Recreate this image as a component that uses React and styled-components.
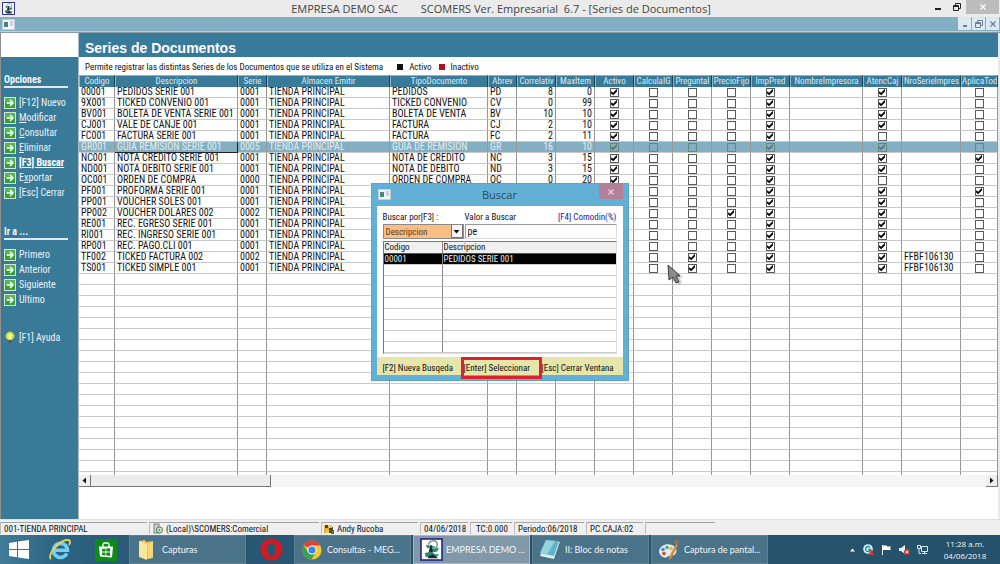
import React from 'react';
import styled, { createGlobalStyle, css } from 'styled-components';

const ui = `'Roboto Condensed', Roboto, 'Liberation Sans', sans-serif`;
const shell = `'Open Sans', 'Noto Sans', sans-serif`;

const Global = createGlobalStyle`
  *, *::before, *::after { box-sizing: border-box; }
  body { margin: 0; background: #fff; font-family: ${ui}; font-size: 9px; line-height: 12px; color: #111; }
  button, input, select { font: inherit; color: inherit; margin: 0; padding: 0; border: 0; background: none; }
  button { cursor: pointer; }
  svg { display: block; flex: none; }
`;

const Screen = styled.div`
  display: flex; flex-direction: column; height: 100vh; overflow: hidden;
`;

/* window chrome */
const TitleBar = styled.header`
  display: grid; grid-template-columns: 96px 1fr 96px; align-items: center;
  height: 17px; padding-left: 2px; background: #ebebeb;
`;
const Title = styled.h1`
  margin: 0; text-align: center; white-space: pre; color: #444;
  font: 400 11px/16px ${shell};
`;
const Controls = styled.div`
  display: flex; justify-content: flex-end; align-items: flex-start; height: 100%; gap: ${p => p.$gap || 0}px; padding-right: 1px;
`;
const WinButton = styled.button`
  display: grid; place-items: center; width: 19px; height: 14px; color: #222;
  ${p => p.$close && css`width: 33px; background: #bcbcbc; color: #fff;`}
`;
const MdiBar = styled.div`
  display: flex; justify-content: space-between; align-items: center;
  height: 16px; padding-left: 2px; background: #84aec2; border-bottom: 1px solid #8b9aa2;
  box-shadow: inset 0 -1px 0 #c3ccd0;
`;
const MdiButton = styled.button`
  display: grid; place-items: center; width: 13px; height: 13px; background: #dce8f2; color: #6d8193;
`;

const Body = styled.div`
  position: relative; display: flex; flex: 1; min-height: 0; border-left: 1px solid #8f8f8f; border-right: 2px solid #e9e9e9;
`;

/* side menu */
const Side = styled.nav`
  flex: none; width: 78px; background: #3a7a99; border-right: 1px solid #a9bcc6; color: #e8f1f5;
`;
const SideLogo = styled.div` height: 24px; background: #fff; `;
const SideHead = styled.h2`
  margin: ${p => p.$top}px 10px 7px 3px; padding-bottom: 1px;
  border-bottom: 2px solid #dfeaf0; font: 700 10px/11px ${ui}; color: #f3f8fa;
`;
const SideList = styled.ul` margin: 0; padding: 0 0 0 3px; list-style: none; `;
const SideButton = styled.button`
  display: flex; align-items: center; gap: 3px; height: 15px; white-space: nowrap;
  font-size: 10px;
  ${p => p.$current && css`font-weight: 700; text-decoration: underline; color: #fff;`}
`;
const HelpArea = styled.div` padding: 23px 0 0 3px; `;

/* document area */
const Main = styled.main` display: flex; flex-direction: column; flex: 1; min-width: 0; `;
const Banner = styled.div`
  flex: none; height: 24px; padding-left: 6px; background: #387a9a; color: #fff;
`;
const BannerTitle = styled.h2` margin: 0; font: 700 14px/30px 'Liberation Sans', sans-serif; height: 24px; `;
const Legend = styled.div` display: flex; align-items: center; flex: none; height: 18px; padding: 2px 6px 0; white-space: nowrap; `;
const LegendKey = styled.span`
  display: inline-flex; align-items: center; gap: 6px; margin-left: ${p => p.$gap}px;
  &::before { content: ''; width: 6px; height: 6px; background: ${p => p.$color}; }
`;
const GridArea = styled.div` flex: 1; min-height: 0; overflow: hidden; `;
const Grid = styled.table`
  width: 100%; table-layout: fixed; border-collapse: separate; border-spacing: 0;
`;
const HeadCell = styled.th`
  height: 12px; padding: 0; overflow: hidden; white-space: nowrap; text-align: center;
  font-weight: 400; line-height: 11px; color: #dcebf2; background: #3a7a99;
  border-right: 1px solid #1d4257; border-left: 1px solid #8fb4c6; border-top: 1px solid #8fb4c6;
`;
const Row = styled.tr`
  ${p => p.$selected && css`background: #84aec1; color: #e0edf3;`}
`;
const Cell = styled.td`
  height: 11px; padding: 0 2px; overflow: hidden; white-space: nowrap; font-size: 10px; line-height: 10px;
  text-align: ${p => p.$align || 'left'};
  border-right: 1px solid #969696; border-bottom: 1px solid #c9c9c9;
  ${p => p.$focus && css`border-right: 1px solid #222; border-bottom: 1px solid #222;`}
`;
const Check = styled.input.attrs({ type: 'checkbox' })`
  appearance: none; display: block; width: 9px; height: 9px; margin: 0 auto;
  border: 1px solid ${p => (p.$dim ? '#5d8f7d' : '#5a5a5a')}; background: ${p => (p.$dim ? 'transparent' : '#fff')};
  &:checked::before {
    content: ''; display: block; width: 7px; height: 7px; background: ${p => (p.$dim ? '#5d7470' : '#000')};
    clip-path: polygon(8% 38%, 38% 60%, 92% 4%, 92% 42%, 38% 96%, 8% 72%);
  }
`;
const ScrollBar = styled.div` display: flex; flex: none; height: 12px; margin-bottom: 32px; background: #f5f5f5; `;
const ScrollButton = styled.button`
  display: grid; place-items: center; width: 12px; height: 12px; background: #efefef;
  border-right: 1px solid #777; border-bottom: 1px solid #777;
`;
const Thumb = styled.div`
  width: 180px; margin-right: auto; background: #ececec;
  border-right: 1px solid #777; border-bottom: 1px solid #777;
`;

/* search dialog */
const Dialog = styled.section`
  position: absolute; top: 150px; left: 50%; width: 258px; margin-left: -129px;
  padding: 0 5px 5px; background: #62b0d6; border: 1px solid #5aa4c9;
`;
const DialogBar = styled.header`
  display: grid; grid-template-columns: 24px 1fr 24px; height: 22px;
`;
const DialogTitle = styled.h2` margin: 0; text-align: center; font: 400 11px/22px ${shell}; color: #2c4a58; `;
const DialogClose = styled.button`
  display: grid; place-items: center; height: 15px; background: #b47f98; color: #e9cfda;
`;
const DialogIconBox = styled.span` display: block; padding: 5px 0 0 1px; `;
const DialogBody = styled.div` padding: 5px 6px 3px; background: #fff; `;
const Fields = styled.div`
  display: grid; grid-template-columns: 81px 1fr; column-gap: 1px; row-gap: 1px; margin-bottom: 2px;
`;
const FieldLabels = styled.div` display: flex; justify-content: space-between; `;
const Label = styled.label` white-space: nowrap; `;
const Hint = styled.span` color: #1c1c9c; white-space: nowrap; `;
const SelectBox = styled.div`
  position: relative; height: 15px; border: 1px solid #8a8a8a; background: #fabd83;
`;
const Select = styled.select` appearance: none; width: 100%; height: 13px; padding-left: 2px; line-height: 12px; color: #5a3a14; `;
const SelectArrow = styled.span`
  position: absolute; top: 0; right: 0; display: grid; place-items: center; width: 12px; height: 13px;
  background: #f4f4f4; border: 1px solid #777; border-width: 0 1px 1px 1px; pointer-events: none;
`;
const TextBox = styled.input` width: 100%; height: 15px; padding: 0 2px; font-size: 10px; border: 1px solid #999; border-right-color: #ddd; border-bottom-color: #ddd; background: #fff; `;
const Results = styled.table`
  width: 100%; table-layout: fixed; border-collapse: separate; border-spacing: 0;
  border: 1px solid #777; border-right-color: #ddd; border-bottom-color: #ddd;
`;
const ResultHead = styled.th`
  height: 12px; padding: 0 1px; text-align: left; font-weight: 400; line-height: 11px; background: #f0f0f0;
  border-right: 1px solid #888; border-bottom: 1px solid #555;
  &:last-child { border-right: 0; }
`;
const ResultCell = styled.td`
  height: 11px; padding: 0 1px; white-space: nowrap; line-height: 10px;
  border-right: 1px solid #888; border-bottom: 1px solid #ccc;
  ${p => p.$active && css`background: #000; color: #eee;`}
  &:last-child { border-right: 0; }
`;
const DialogFooter = styled.footer` display: flex; align-items: flex-start; height: 18px; padding-left: 6px; background: #e6e6ab; `;
const FooterButton = styled.button`
  flex: none; height: 22px; white-space: nowrap; text-align: left;
  width: ${p => p.$w}px;
  ${p => p.$marked && css`border: 3px solid #e0212b;`}
`;
const Pointer = styled.svg` position: absolute; left: 666px; top: 231px; `;

/* status line */
const Status = styled.footer`
  display: flex; flex: none; gap: 2px; height: 16px; padding: 2px 0 1px; background: #efefef; border-top: 1px solid #e0e0e0;
`;
const Panel = styled.div`
  display: flex; align-items: center; gap: 3px; width: ${p => p.$w}px; padding-left: ${p => p.$pad || 3}px; white-space: nowrap;
  border-top: 1px solid #a5a5a5; border-left: 1px solid #bdbdbd;
`;

/* task bar */
const TaskBar = styled.div`
  display: flex; flex: none; align-items: stretch; height: 29px; color: #f2f6f8;
  font: 400 9px/12px Lato, ${shell};
  background: linear-gradient(90deg, #3f7d9b 0, #2b6280 60px, #2a5a77 130px, #28536d 400px, #24516b 100%);
`;
const Launcher = styled.button`
  display: grid; place-items: center; width: ${p => p.$w}px;
`;
const Task = styled.button`
  display: flex; align-items: center; gap: 3px; width: 117px; margin-right: 2px; padding-left: 5px; overflow: hidden; white-space: nowrap;
  background: ${p => (p.$active ? '#8098a8' : '#4a7289')}; border: 1px solid ${p => (p.$active ? '#a9bac5' : '#5d8297')};
`;
const TaskIcon = styled.span` display: grid; place-items: center; width: 24px; flex: none; `;
const Tray = styled.div` display: flex; align-items: center; gap: 7px; margin-left: auto; padding-right: 12px; `;
const Clock = styled.time` display: block; width: 46px; text-align: center; white-space: nowrap; margin-left: 7px; font: 400 8px/12px ${shell}; `;

const AppIcon = ({ size = 13 }) => (
  <svg width={size} height={size} viewBox="0 0 24 24">
    <rect x="1" y="1" width="22" height="22" fill="#fff" stroke="#2b2f8a" strokeWidth="1.800" />
    <path d="M9 7c0-5 9-6 9 0 0 2-1 3-2 4" fill="none" stroke="#777" strokeWidth="1.300" />
    <path d="M11 7l4 2-1 5-4 4-3 2 2-5 1-4z" fill="#222" />
    <path d="M6 7l5 1-1 3-3-1zM13 12l7-2-2 4-5 1zM5 16l6-2 5 3 4 0-3 3-6-1-5 1z" fill="#2a8c78" />
    <path d="M9 19l4-2 6 4H8z" fill="#222" /><path d="M12 9l3-1 1 3-3 1z" fill="#56ad9c" />
  </svg>
);
const FormIcon = () => (
  <svg width="13" height="11" viewBox="0 0 13 11">
    <rect x="0.5" y="0.5" width="12" height="10" fill="#f1f3f4" stroke="#c3cdd2" />
    <rect x="2" y="3" width="4" height="5" fill="#49857c" /><rect x="8" y="2" width="3" height="5" fill="#c9d2d8" />
  </svg>
);
const GoIcon = () => (
  <svg width="12" height="12" viewBox="0 0 12 12">
    <rect x="0.5" y="0.5" width="11" height="11" fill="#35a035" stroke="#cfe8cf" />
    <path d="M1 1h10v4H1z" fill="#58b658" />
    <path d="M2.5 6h6M6 3l3 3-3 3" fill="none" stroke="#fff" strokeWidth="1.6" />
  </svg>
);
const BulbIcon = () => (
  <svg width="12" height="13" viewBox="0 0 12 13">
    <circle cx="6" cy="5" r="4.3" fill="#d9e84a" stroke="#87a63c" strokeWidth="0.7" />
    <path d="M4.500 4.500c0-2 3-2 3 0L6.800 8H5.200z" fill="#fbffc0" />
    <path d="M4.500 9h3v3h-3z" fill="#55584a" />
  </svg>
);
const Minus = ({ w = 6 }) => <svg width={w} height="8"><path d={`M0 6h${w}`} stroke="currentColor" strokeWidth="2" /></svg>;
const Restore = () => (
  <svg width="8" height="8" viewBox="0 0 8 8" fill="none" stroke="currentColor">
    <path d="M0.5 2.5h5v5h-5zM2.5 2V0.5h5v5H6M0.5 3.5h5" />
  </svg>
);
const Cross = ({ size = 6 }) => (
  <svg width={size} height={size} viewBox="0 0 6 6"><path d="M0.5 0.5l5 5M5.5 0.5l-5 5" stroke="currentColor" strokeWidth="1.3" /></svg>
);
const Triangle = ({ d }) => <svg width="7" height="7" viewBox="0 0 7 7"><path d={d} fill="currentColor" /></svg>;

const columns = [
  ['Codigo', 36], ['Descripcion', 123], ['Serie', 29], ['Almacen Emitir', 123], ['TipoDocumento', 98], ['Abrev', 29],
  ['Correlativ', 39], ['MaxItem', 39], ['Activo', 39], ['CalculaIG', 39], ['PreguntaI', 39], ['PrecioFijo', 39],
  ['ImpPred', 39], ['NombreImpresora', 73], ['AtencCaj', 39], ['NroSerieImpres', 59], ['AplicaTod', null],
];
/* flags: Activo, CalculaIG, PreguntaI, PrecioFijo, ImpPred, AtencCaj, AplicaTod */
const rows = [
  ['00001', 'PEDIDOS SERIE 001', '0001', 'PEDIDOS', 'PD', 8, 0, '1000110'],
  ['9X001', 'TICKED CONVENIO 001', '0001', 'TICKED CONVENIO', 'CV', 0, 99, '1000110'],
  ['BV001', 'BOLETA DE VENTA SERIE 001', '0001', 'BOLETA DE VENTA', 'BV', 10, 10, '1000110'],
  ['CJ001', 'VALE DE CANJE 001', '0001', 'FACTURA', 'CJ', 2, 10, '1000110'],
  ['FC001', 'FACTURA SERIE 001', '0001', 'FACTURA', 'FC', 2, 11, '1000100'],
  ['GR001', 'GUIA REMISION SERIE 001', '0005', 'GUIA DE REMISION', 'GR', 16, 10, '1000110'],
  ['NC001', 'NOTA CREDITO SERIE 001', '0001', 'NOTA DE CREDITO', 'NC', 3, 15, '1000111'],
  ['ND001', 'NOTA DEBITO SERIE 001', '0001', 'NOTA DE DEBITO', 'ND', 3, 15, '1000110'],
  ['OC001', 'ORDEN DE COMPRA', '0000', 'ORDEN DE COMPRA', 'OC', 0, 20, '1000100'],
  ['PF001', 'PROFORMA SERIE 001', '0001', '', '', '', '', '1000111'],
  ['PP001', 'VOUCHER SOLES 001', '0001', '', '', '', '', '1000110'],
  ['PP002', 'VOUCHER DOLARES 002', '0002', '', '', '', '', '1001110'],
  ['RE001', 'REC. EGRESO SERIE 001', '0001', '', '', '', '', '1000110'],
  ['RI001', 'REC. INGRESO SERIE 001', '0001', '', '', '', '', '1000110'],
  ['RP001', 'REC. PAGO.CLI 001', '0001', '', '', '', '', '1000110'],
  ['TF002', 'TICKED FACTURA 002', '0002', '', '', '', '', '1010110', 'FFBF106130'],
  ['TS001', 'TICKED SIMPLE 001', '0001', '', '', '', '', '1010110', 'FFBF106130'],
];

const Flag = ({ on, dim, label }) => (
  <Cell><Check defaultChecked={on} $dim={dim} aria-label={label} /></Cell>
);

const SideItem = ({ children, icon, current }) => (
  <SideButton type="button" $current={current}>{icon || <GoIcon />}<span>{children}</span></SideButton>
);

function DataRow({ row }) {
  const [code, name, serie, type, abbr, corr, max, f, printer = ''] = row;
  const sel = code === 'GR001';
  const flag = (i, label) => <Flag on={f[i] === '1'} dim={sel} label={`${label} ${code}`} />;
  return (
    <Row $selected={sel}>
      <Cell>{code}</Cell>
      <Cell $focus={sel}>{name}</Cell>
      <Cell>{serie}</Cell>
      <Cell>TIENDA PRINCIPAL</Cell>
      <Cell>{type}</Cell>
      <Cell>{abbr}</Cell>
      <Cell $align="right">{corr}</Cell>
      <Cell $align="right">{max}</Cell>
      {flag(0, 'Activo')}{flag(1, 'CalculaIG')}{flag(2, 'PreguntaI')}{flag(3, 'PrecioFijo')}{flag(4, 'ImpPred')}
      <Cell />
      {flag(5, 'AtencCaj')}
      <Cell>{printer}</Cell>
      {flag(6, 'AplicaTod')}
    </Row>
  );
}

function SearchDialog() {
  return (
    <Dialog role="dialog" aria-label="Buscar">
      <DialogBar>
        <DialogIconBox><FormIcon /></DialogIconBox>
        <DialogTitle>Buscar</DialogTitle>
        <DialogClose type="button" aria-label="Cerrar"><Cross /></DialogClose>
      </DialogBar>
      <DialogBody>
        <Fields>
          <Label htmlFor="by">Buscar por[F3] :</Label>
          <FieldLabels><Label htmlFor="value">Valor a Buscar</Label><Hint>[F4] Comodin(%)</Hint></FieldLabels>
          <SelectBox>
            <Select id="by" defaultValue="d"><option value="d">Descripcion</option><option value="c">Codigo</option></Select>
            <SelectArrow><Triangle d="M0.5 2h6l-3 3.5z" /></SelectArrow>
          </SelectBox>
          <TextBox id="value" type="text" defaultValue="pe" />
        </Fields>
        <Results>
          <colgroup><col width="59" /><col /></colgroup>
          <thead><tr><ResultHead>Codigo</ResultHead><ResultHead>Descripcion</ResultHead></tr></thead>
          <tbody>
            <tr><ResultCell $active>00001</ResultCell><ResultCell $active>PEDIDOS SERIE 001</ResultCell></tr>
            {Array.from({ length: 8 }, (_, i) => <tr key={i}><ResultCell /><ResultCell /></tr>)}
          </tbody>
        </Results>
      </DialogBody>
      <DialogFooter>
        <FooterButton type="button" $w={78}>[F2] Nueva Busqeda</FooterButton>
        <FooterButton type="button" $w={81} $marked>[Enter] Seleccionar</FooterButton>
        <FooterButton type="button" $w={80}>[Esc] Cerrar Ventana</FooterButton>
      </DialogFooter>
    </Dialog>
  );
}

export default function App() {
  return (
    <>
      <Global />
      <Screen>
        <TitleBar>
          <AppIcon />
          <Title>{'EMPRESA DEMO SAC        SCOMERS Ver. Empresarial  6.7 - [Series de Documentos]'}</Title>
          <Controls>
            <WinButton type="button" aria-label="Minimizar"><Minus /></WinButton>
            <WinButton type="button" aria-label="Restaurar"><Restore /></WinButton>
            <WinButton type="button" aria-label="Cerrar" $close><Cross /></WinButton>
          </Controls>
        </TitleBar>
        <MdiBar>
          <FormIcon />
          <Controls $gap={1}>
            <MdiButton type="button" aria-label="Minimizar documento"><Minus w={4} /></MdiButton>
            <MdiButton type="button" aria-label="Restaurar documento"><Restore /></MdiButton>
            <MdiButton type="button" aria-label="Cerrar documento"><Cross /></MdiButton>
          </Controls>
        </MdiBar>
        <Body>
          <Side>
            <SideLogo />
            <SideHead $top={17}>Opciones</SideHead>
            <SideList>
              <li><SideItem>[F12] Nuevo</SideItem></li>
              <li><SideItem><u>M</u>odificar</SideItem></li>
              <li><SideItem><u>C</u>onsultar</SideItem></li>
              <li><SideItem><u>E</u>liminar</SideItem></li>
              <li><SideItem current>[F3] Buscar</SideItem></li>
              <li><SideItem>E<u>x</u>portar</SideItem></li>
              <li><SideItem>[Esc] Cerrar</SideItem></li>
            </SideList>
            <SideHead $top={26}>Ir a ...</SideHead>
            <SideList>
              <li><SideItem>Primero</SideItem></li>
              <li><SideItem>Anterior</SideItem></li>
              <li><SideItem>Siguiente</SideItem></li>
              <li><SideItem>Ultimo</SideItem></li>
            </SideList>
            <HelpArea><SideItem icon={<BulbIcon />}>[F1] Ayuda</SideItem></HelpArea>
          </Side>
          <Main>
            <Banner><BannerTitle>Series de Documentos</BannerTitle></Banner>
            <Legend>
              <span>Permite registrar las distintas Series de los Documentos que se utiliza en el Sistema</span>
              <LegendKey $color="#111" $gap={14}>Activo</LegendKey>
              <LegendKey $color="#b01018" $gap={7}>Inactivo</LegendKey>
            </Legend>
            <GridArea>
              <Grid>
                <colgroup>{columns.map(([n, w]) => <col key={n} width={w || undefined} />)}</colgroup>
                <thead><tr>{columns.map(([n]) => <HeadCell key={n} scope="col">{n}</HeadCell>)}</tr></thead>
                <tbody>
                  {rows.map(r => <DataRow key={r[0]} row={r} />)}
                  {Array.from({ length: 19 }, (_, i) => (
                    <Row key={i}>{columns.map(([n]) => <Cell key={n} />)}</Row>
                  ))}
                </tbody>
              </Grid>
            </GridArea>
            <ScrollBar>
              <ScrollButton type="button" aria-label="Izquierda"><Triangle d="M5 0.5v6L1.5 3.5z" /></ScrollButton>
              <Thumb />
              <ScrollButton type="button" aria-label="Derecha"><Triangle d="M2 0.5v6L5.5 3.5z" /></ScrollButton>
            </ScrollBar>
          </Main>
          <SearchDialog />
          <Pointer width="16" height="22" viewBox="0 0 16 22">
            <path d="M3 2l2 17 4-3 3 5 3-2-2-5 3-1z" fill="#000" opacity="0.18" />
            <path d="M1 1l1 15 4-3 3 6 3-1-3-6h4z" fill="#8c8c8c" stroke="#3b3b3b" />
          </Pointer>
        </Body>
        <Status>
          <Panel $w={147}>001-TIENDA PRINCIPAL</Panel>
          <Panel $w={170}>
            <svg width="10" height="11" viewBox="0 0 10 11"><rect x="1" y="1" width="5" height="9" fill="#c9cec9" stroke="#7d857d" /><circle cx="6.5" cy="7" r="3" fill="#dfeee0" stroke="#48744c" /><path d="M5.8 5.5v3l2-1.5z" fill="#2b8a35" /></svg>
            (Local)\SCOMERS:Comercial
          </Panel>
          <Panel $w={97} $pad={1}>
            <svg width="11" height="10" viewBox="0 0 11 10"><path d="M1 2h5v7H1z" fill="#e2b13a" /><path d="M2 1h3v3H2zM6 3h4v6H6z" fill="#57401a" /><path d="M6 1h3v3H6zM3 6h3v3H3z" fill="#f0ca3f" /><path d="M8 6h3v4H8z" fill="#3a7a35" /></svg>
            Andy Rucoba
          </Panel>
          <Panel $w={48}>04/06/2018</Panel>
          <Panel $w={42} $pad={5}>TC:0.000</Panel>
          <Panel $w={70}>Periodo:06/2018</Panel>
          <Panel $w={57}>PC.CAJA:02</Panel>
          <Panel $w={70} />
        </Status>
        <TaskBar>
          <Launcher type="button" $w={38} aria-label="Inicio">
            <svg width="20" height="19" viewBox="0 0 20 19"><path d="M0 3l8-1.2V9H0zM9 1.6L20 0v9H9zM0 10h8v7.2L0 16zM9 10h11v9L9 17.4z" fill="#fff" /></svg>
          </Launcher>
          <Launcher type="button" $w={44} aria-label="Internet Explorer">
            <svg width="24" height="22" viewBox="0 0 24 22">
              <path d="M18.800 14.500a7 7 0 1 1 .7-3.200H7" fill="none" stroke="#6fd0f5" strokeWidth="3.600" />
              <path d="M3 20C-1 17 9 3 18 1c4-1 5 2 3 5" fill="none" stroke="#f2cf4b" strokeWidth="1.800" />
            </svg>
          </Launcher>
          <Launcher type="button" $w={47} aria-label="Tienda">
            <svg width="22" height="22" viewBox="0 0 22 22">
              <path d="M0 0h22v22H0z" fill="#0c8c17" />
              <path d="M4 7.500l14 0-1 11-12-1z" fill="#fff" />
              <path d="M8 8V5.500a1.500 1.500 0 0 1 1.500-1.500h3A1.500 1.500 0 0 1 14 5.500V8" fill="none" stroke="#fff" strokeWidth="1.300" />
              <path d="M7 10l3.500-.4v3H7zM11.300 9.500L15 9.200v3.400h-3.700zM7 13.400h3.500v3L7 16zM11.300 13.400H15V17l-3.700-.4z" fill="#0c8c17" />
            </svg>
          </Launcher>
          <Task type="button">
            <TaskIcon><svg width="18" height="22" viewBox="0 0 18 22"><path d="M1 2l6-1 1 2 7-1v17l-6 1z" fill="#e9c65d" /><path d="M1 2l8 3v16l-8-3z" fill="#fae79c" /><path d="M10 4l5-1v15l-5 2z" fill="#f4d878" /></svg></TaskIcon>
            Capturas
          </Task>
          <Launcher type="button" $w={46} aria-label="Opera">
            <svg width="23" height="23" viewBox="0 0 23 23"><path fillRule="evenodd" d="M11.500 0.500a11 11 0 1 0 0 22 11 11 0 1 0 0-22zm0 4.200c2.600 0 4 3 4 6.800s-1.400 6.800-4 6.800-4-3-4-6.800 1.400-6.800 4-6.800z" fill="#d31a22" /></svg>
          </Launcher>
          <Task type="button">
            <TaskIcon><svg width="20" height="20" viewBox="0 0 20 20"><circle cx="10" cy="10" r="9.500" fill="#f5c92e" /><path d="M10 10L1.800 5.200A9.500 9.500 0 0 1 18.300 5.500H10z" fill="#dd4437" /><path d="M1.800 5.200A9.500 9.500 0 0 0 9.500 19.500L14 12 6 12z" fill="#37a352" /><circle cx="10" cy="10" r="4.600" fill="#fff" /><circle cx="10" cy="10" r="3.600" fill="#3f83ea" /></svg></TaskIcon>
            Consultas - MEG...
          </Task>
          <Task type="button" $active>
            <TaskIcon><AppIcon size={23} /></TaskIcon>
            EMPRESA DEMO ...
          </Task>
          <Task type="button">
            <TaskIcon><svg width="22" height="22" viewBox="0 0 22 22"><path d="M7 2l14 1-1 2-5 15-14-3z" fill="#dff0f3" /><path d="M7 1l13 1-5 15L1 14z" fill="#5fb3c4" /><path d="M7 1l9 1-8 14-7-2z" fill="#93d3de" /></svg></TaskIcon>
            II: Bloc de notas
          </Task>
          <Task type="button">
            <TaskIcon><svg width="22" height="22" viewBox="0 0 22 22"><path d="M1 12C2 6 9 4 14 6s6 8 2 10-5 0-7 2-8-1-8-6z" fill="#e3eaf0" /><circle cx="5" cy="10.500" r="1.800" fill="#3f8edb" /><circle cx="9" cy="8.500" r="1.700" fill="#49b04d" /><circle cx="13" cy="9.500" r="1.700" fill="#e5b93a" /><circle cx="6" cy="14.500" r="1.800" fill="#d2483b" /><path d="M18 5l2 1-6 12c-1 2-3 3-3 3s0-3 1-5z" fill="#d98c34" /><path d="M16 1l5 1-1 4-3-1z" fill="#9a7446" /></svg></TaskIcon>
            Captura de pantal...
          </Task>
          <Tray>
            <svg width="7" height="4" viewBox="0 0 7 4"><path d="M1 3.500h5L3.500 0.500z" fill="#fff" /></svg>
            <svg width="11" height="11" viewBox="0 0 11 11"><circle cx="5" cy="5" r="4.800" fill="#d9f0f2" /><path d="M7 3.500A2.500 2.500 0 1 0 7.500 5.500H5" fill="none" stroke="#1d97a8" strokeWidth="1.400" /><path d="M8 5l3 6H5.500z" fill="#d8372c" /></svg>
            <svg width="11" height="11" viewBox="0 0 11 11"><path d="M1.500 1v10" stroke="#fff" /><path d="M2 1.500h4v1h4l-1 2 1 1.500H6V6H2z" fill="#fff" /></svg>
            <svg width="11" height="11" viewBox="0 0 11 11"><path d="M0 4h2l4-3v9L2 7H0z" fill="#e8eef1" /><circle cx="8" cy="8" r="3" fill="#d8372c" /><path d="M6.800 6.800l2.400 2.400M9.200 6.800L6.800 9.200" stroke="#fff" /></svg>
            <svg width="11" height="11" viewBox="0 0 11 11" fill="none" stroke="#dfe8ec"><path d="M4.500 2.500h6v5h-6zM5 9.500h5M0.500 1.500h3v3h-3zM2 5v4.500h2M7.500 8v1.500" /></svg>
            <Clock>11:28 a.m.<br />04/06/2018</Clock>
          </Tray>
        </TaskBar>
      </Screen>
    </>
  );
}
